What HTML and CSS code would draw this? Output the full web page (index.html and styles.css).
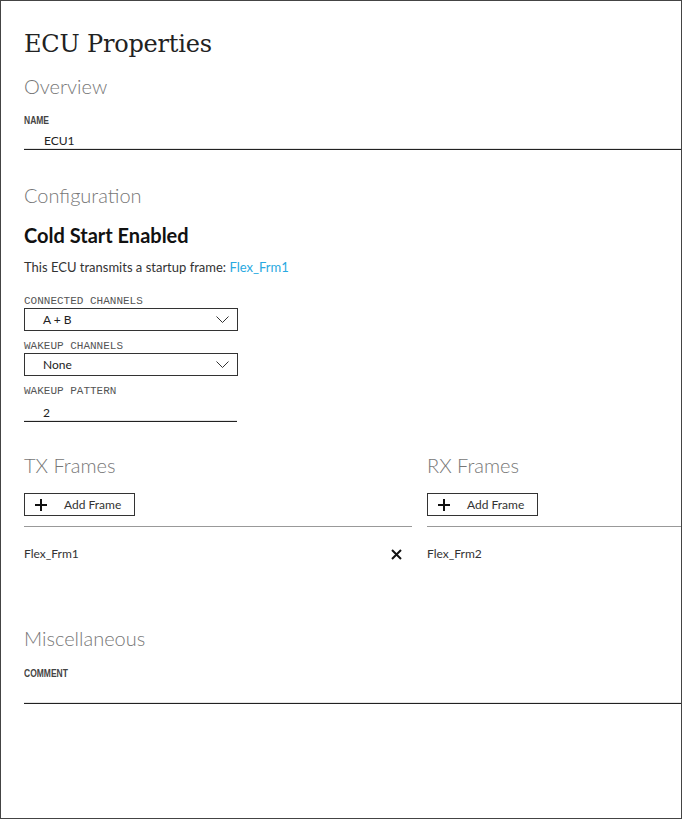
FILE: index.html
```html
<!DOCTYPE html>
<html lang="en">
	<head>
		<meta charset="UTF-8" />
		<title>ECU Properties</title>
		<link rel="stylesheet" href="styles.css">
	</head>
	<body>
		<div id="panel">
			<div id="content">
				<h1 class="title">ECU Properties</h1>

				<h2 class="section">Overview</h2>
				<div class="label label-strong">NAME</div>
				<div class="line-input wide">ECU1</div>

				<h2 class="section section-gap">Configuration</h2>
				<h3 class="subtitle">Cold Start Enabled</h3>
				<p class="note">This ECU transmits a startup frame: <a class="link">Flex_Frm1</a></p>

				<div class="label first">CONNECTED CHANNELS</div>
				<div class="select">
					<span>A + B</span>
					<svg width="13" height="8" viewBox="0 0 13 8"><polyline points="0.5,0.5 6.5,6.5 12.5,0.5" fill="none" stroke="#333" stroke-width="1" /></svg>
				</div>
				<div class="label">WAKEUP CHANNELS</div>
				<div class="select">
					<span>None</span>
					<svg width="13" height="8" viewBox="0 0 13 8"><polyline points="0.5,0.5 6.5,6.5 12.5,0.5" fill="none" stroke="#333" stroke-width="1" /></svg>
				</div>
				<div class="label">WAKEUP PATTERN</div>
				<div class="line-input short">2</div>

				<div class="frames">
					<div class="frame-col">
						<h2 class="section">TX Frames</h2>
						<button class="add-btn">
							<svg width="12" height="12" viewBox="0 0 12 12"><path d="M6 0V12M0 6H12" stroke="#111" stroke-width="2" /></svg>
							<span>Add Frame</span>
						</button>
						<div class="frame-row">
							<span>Flex_Frm1</span>
							<svg width="11" height="11" viewBox="0 0 11 11"><path d="M1 1L10 10M10 1L1 10" stroke="#111" stroke-width="2" /></svg>
						</div>
					</div>
					<div class="frame-col">
						<h2 class="section">RX Frames</h2>
						<button class="add-btn">
							<svg width="12" height="12" viewBox="0 0 12 12"><path d="M6 0V12M0 6H12" stroke="#111" stroke-width="2" /></svg>
							<span>Add Frame</span>
						</button>
						<div class="frame-row">
							<span>Flex_Frm2</span>
						</div>
					</div>
				</div>

				<h2 class="section misc">Miscellaneous</h2>
				<div class="label label-strong misc-label">COMMENT</div>
				<div class="line-input wide comment"></div>
			</div>
		</div>
	</body>
</html>
```

FILE: styles.css
```css
body {
	margin: 0;
	font-family: Lato, "Open Sans", sans-serif;
	color: #222;
}

#panel {
	width: 682px;
	height: 819px;
	box-sizing: border-box;
	border: 1px solid #444;
	overflow: hidden;
	padding: 0 1px 0 23px;
}

#content {
	width: 791px;
}

.title {
	font-family: "DejaVu Serif", "Liberation Serif", serif;
	font-weight: normal;
	font-size: 24px;
	letter-spacing: -0.2px;
	line-height: 32px;
	margin: 27px 0 0;
	color: #222;
}

.section {
	font-weight: 300;
	font-size: 20px;
	line-height: 24px;
	color: #777;
	margin: 14px 0 0;
}

.section-gap {
	margin-top: 33px;
}

.subtitle {
	font-weight: bold;
	font-size: 20px;
	line-height: 24px;
	margin: 16px 0 0;
	color: #111;
}

.note {
	font-size: 13px;
	line-height: 16px;
	margin: 12px 0 0;
	color: #333;
}

.link {
	color: #29a9e1;
}

.label {
	font-family: "Liberation Mono", monospace;
	font-size: 11px;
	line-height: 12px;
	color: #555;
	margin-top: 9px;
}

.label.first {
	margin-top: 20px;
}

.label-strong {
	font-family: "Liberation Sans", sans-serif;
	font-weight: bold;
	font-size: 10px;
	transform: scaleX(0.85);
	transform-origin: left;
	color: #444;
	margin-top: 17px;
}

.line-input {
	font-size: 12px;
	line-height: 16px;
	height: 16px;
	padding: 3px 0 0 20px;
	border-bottom: 1px solid #222;
	box-shadow: 0 -1px 0 #e4e4e4 inset;
}

.line-input.short {
	width: 194px;
	padding-left: 19px;
	margin-top: 5px;
}

.line-input.wide {
	margin-top: 3px;
}

.comment {
	height: 17px;
	margin-top: 0;
}

.label-strong.misc-label {
	margin-top: 18px;
}

.select {
	width: 214px;
	height: 23px;
	box-sizing: border-box;
	border: 1px solid #333;
	display: flex;
	align-items: center;
	justify-content: space-between;
	padding: 0 8px 0 18px;
	font-size: 12px;
	margin-top: 1px;
}

.frames {
	display: flex;
	gap: 15px;
	margin-top: 19px;
}

.frame-col {
	width: 388px;
}

.frame-col .section {
	margin-top: 12px;
}

.add-btn {
	display: flex;
	align-items: center;
	gap: 17px;
	height: 23px;
	width: 111px;
	box-sizing: border-box;
	border: 1px solid #333;
	background: #fff;
	padding: 0 0 0 10px;
	margin-top: 16px;
	font-family: Lato, "Open Sans", sans-serif;
	font-size: 12px;
	color: #333;
}

.frame-row {
	border-top: 1px solid #999;
	margin-top: 10px;
	padding: 19px 10px 0 0;
	display: flex;
	justify-content: space-between;
	align-items: center;
	font-size: 12px;
	line-height: 16px;
	color: #333;
}

.misc {
	margin-top: 64px;
}
```
